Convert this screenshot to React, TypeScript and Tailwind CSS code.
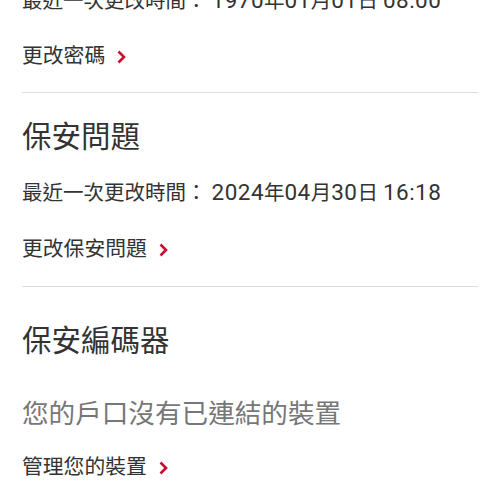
// Latin digits render larger than the CJK glyphs in the reference, so wrap them
const Mixed = ({ text }: { text: string }) => (
  <>
    {text.split(/([0-9:]+(?: [0-9:]+)*)/).map((part, i) =>
      /[0-9]/.test(part) ? (
        <span key={i} className="text-[22.5px] tracking-[0.45px]">
          {part}
        </span>
      ) : (
        <span key={i}>{part}</span>
      )
    )}
  </>
);

const ArrowLink = ({ label }: { label: string }) => (
  <a href="#" className="flex h-[28px] items-center gap-[12px] text-[20.8px] leading-[28px] text-[#333333]">
    <span>{label}</span>
    <svg width="9" height="14" viewBox="0 0 9 14" fill="none" className="mt-[1px]">
      <path d="M1.5 1.5L7 7L1.5 12.5" stroke="#c8102e" strokeWidth="2.6" strokeLinecap="butt" />
    </svg>
  </a>
);

export default function App() {
  return (
    <div
      className="h-[500px] w-[500px] overflow-hidden bg-white px-[22px]"
      style={{ fontFamily: 'Roboto, "Noto Sans CJK TC", sans-serif' }}
    >
      <p className="-mt-[14px] whitespace-nowrap text-[20.5px] leading-[28px] text-[#333333]">
        <Mixed text="最近一次更改時間： 1970年01月01日 08:00" />
      </p>
      <div className="mt-[27px]">
        <ArrowLink label="更改密碼" />
      </div>
      <hr className="mt-[22px] border-t-[1.5px] border-[#dddddd]" />

      <h2 className="mt-[26px] text-[29.5px] leading-[36px] text-[#333333]">保安問題</h2>
      <p className="mt-[23px] whitespace-nowrap text-[20.5px] leading-[28px] text-[#333333]">
        <Mixed text="最近一次更改時間： 2024年04月30日 16:18" />
      </p>
      <div className="mt-[28px]">
        <ArrowLink label="更改保安問題" />
      </div>
      <hr className="mt-[23px] border-t-[1.5px] border-[#dddddd]" />

      <h2 className="mt-[36px] text-[29.5px] leading-[36px] text-[#333333]">保安編碼器</h2>
      <p className="mt-[38px] text-[26.6px] leading-[34px] text-[#777777]">您的戶口沒有已連結的裝置</p>
      <div className="mt-[22px]">
        <ArrowLink label="管理您的裝置" />
      </div>
    </div>
  );
}
